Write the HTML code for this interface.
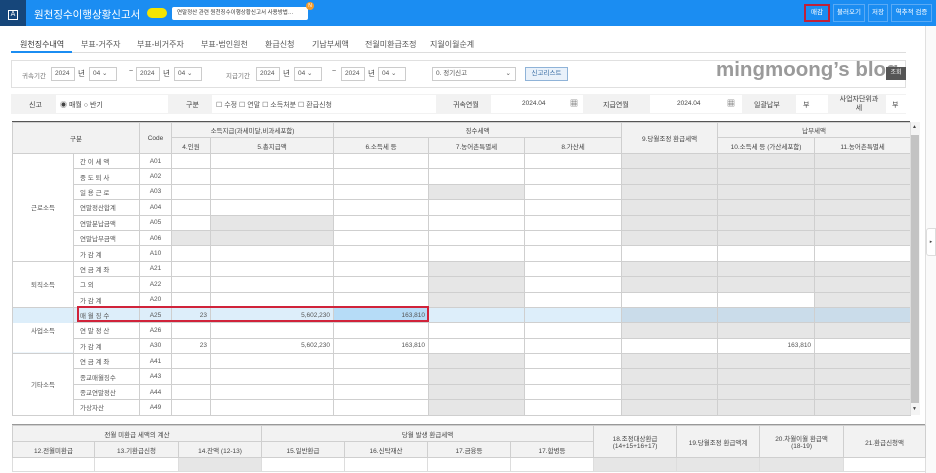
<!DOCTYPE html>
<html><head><meta charset="utf-8">
<style>
*{box-sizing:border-box;margin:0;padding:0}
body{width:936px;height:473px;overflow:hidden;background:#fff;font-family:"Liberation Sans","Noto Sans CJK KR",sans-serif;font-size:7px;color:#444;position:relative}
.a{position:absolute}
.hdr{left:0;top:0;width:936px;height:26px;background:#1b8df2}
.sq{left:0;top:0;width:26px;height:26px;background:#16467a;color:#fff;font-size:9px;text-align:center;line-height:26px}
.sq span{display:inline-block;border:1px solid #fff;width:10px;height:10px;line-height:8px;font-size:7px}
.btn{top:4px;height:18px;border:1px solid #5aaaf5;color:#fff;font-size:6.5px;line-height:16px;text-align:center}
.tabs span{position:absolute;top:39px;font-size:8px;color:#555}
.sel{height:14px;border:1px solid #ccc;background:#fff;font-size:6.5px;line-height:12px;padding-left:3px;color:#555}
table{border-collapse:collapse;table-layout:fixed}
.m td{border:1px solid #cfcfcf;height:15.4px;font-size:6.5px;color:#555;text-align:center;padding:0 3px;white-space:nowrap;overflow:hidden}
.m th,.b th{background:#f2f2f2;border:1px solid #cfcfcf;font-weight:normal;font-size:6.5px;color:#444;white-space:nowrap}
.m td.l{text-align:left;padding-left:6px}
.m td.r{text-align:right}
.g{background:#e6e6e6}
.hl td{background:#ddeefa}
.hl td.g{background:#cadcea}
.hl td.s{background:#b6dcf7}
.b td{border:1px solid #ddd;height:14px}
</style></head><body>
<div class="a hdr"></div>
<div class="a sq"><span>A</span></div>
<div class="a" style="left:34px;top:7px;color:#fff;font-size:10.5px">원천징수이행상황신고서</div>
<div class="a" style="left:147px;top:8px;width:20px;height:10px;border-radius:5px;background:#f5e400"></div>
<div class="a" style="left:172px;top:7px;width:136px;height:13px;background:#fff;border-radius:2px;font-size:5.5px;line-height:13px;padding-left:5px;color:#333">연말정산 관련 원천징수이행상황신고서 사용방법…</div>
<div class="a" style="left:306px;top:2px;width:8px;height:8px;border-radius:4px;background:#f39a2a;color:#fff;font-size:5px;text-align:center;line-height:8px">N</div>
<div class="a btn" style="left:804px;width:26px;border:2px solid #c0213a;line-height:14px">매감</div>
<div class="a btn" style="left:833px;width:32px">불러오기</div>
<div class="a btn" style="left:868px;width:20px">저장</div>
<div class="a btn" style="left:891px;width:41px">역추적 검증</div>

<div class="tabs">
<span style="left:20px;color:#333">원천징수내역</span>
<span style="left:81px">부표-거주자</span>
<span style="left:137px">부표-비거주자</span>
<span style="left:201px">부표-법인원천</span>
<span style="left:265px">환급신청</span>
<span style="left:312px">기납부세액</span>
<span style="left:365px">전월미환급조정</span>
<span style="left:430px">지월이월순계</span>
</div>
<div class="a" style="left:11px;top:52px;width:895px;height:1px;background:#ddd"></div>
<div class="a" style="left:11px;top:51px;width:61px;height:2px;background:#1b8df2"></div>

<div class="a" style="left:11px;top:60px;width:895px;height:28px;border:1px solid #e0e0e0"></div>
<div class="a" style="left:22px;top:70px;font-size:6.5px;color:#777">귀속기간</div>
<div class="a sel" style="left:51px;top:67px;width:24px">2024</div>
<div class="a" style="left:78px;top:68px;font-size:7.5px">년</div>
<div class="a sel" style="left:89px;top:67px;width:28px">04 ⌄</div>
<div class="a" style="left:129px;top:68px;font-size:7px">~</div>
<div class="a sel" style="left:136px;top:67px;width:24px">2024</div>
<div class="a" style="left:163px;top:68px;font-size:7.5px">년</div>
<div class="a sel" style="left:174px;top:67px;width:28px">04 ⌄</div>
<div class="a" style="left:226px;top:70px;font-size:6.5px;color:#777">지급기간</div>
<div class="a sel" style="left:256px;top:67px;width:24px">2024</div>
<div class="a" style="left:283px;top:68px;font-size:7.5px">년</div>
<div class="a sel" style="left:294px;top:67px;width:28px">04 ⌄</div>
<div class="a" style="left:332px;top:68px;font-size:7px">~</div>
<div class="a sel" style="left:341px;top:67px;width:24px">2024</div>
<div class="a" style="left:368px;top:68px;font-size:7.5px">년</div>
<div class="a sel" style="left:378px;top:67px;width:28px">04 ⌄</div>
<div class="a sel" style="left:432px;top:67px;width:84px">0. 정기신고 <span style="float:right;padding-right:4px">⌄</span></div>
<div class="a" style="left:525px;top:67px;width:43px;height:14px;border:1px solid #8fb3d8;background:#e9f1fa;font-size:6.5px;line-height:12px;text-align:center;color:#3c6fa5">신고리스트</div>
<div class="a" style="left:716px;top:58px;font-size:20.5px;font-weight:bold;color:#9a9a9a">mingmoong’s blog</div>
<div class="a" style="left:886px;top:67px;width:20px;height:13px;background:#555;color:#fff;font-size:6px;text-align:center;line-height:13px">조회</div>

<div class="a" style="left:11px;top:94px;width:895px;height:20px;background:#f2f2f2"></div>
<div class="a" style="left:56px;top:95px;width:112px;height:18px;background:#fff"></div>
<div class="a" style="left:212px;top:95px;width:224px;height:18px;background:#fff"></div>
<div class="a" style="left:491px;top:95px;width:92px;height:18px;background:#fff"></div>
<div class="a" style="left:650px;top:95px;width:92px;height:18px;background:#fff"></div>
<div class="a" style="left:796px;top:95px;width:32px;height:18px;background:#fff"></div>
<div class="a" style="left:886px;top:95px;width:20px;height:18px;background:#fff"></div>
<div class="a" style="left:29px;top:100px;font-size:7px">신고</div>
<div class="a" style="left:60px;top:100px;font-size:7px">◉ 매월 ○ 반기</div>
<div class="a" style="left:186px;top:100px;font-size:7px">구분</div>
<div class="a" style="left:216px;top:100px;font-size:7px;color:#555">☐ 수정 ☐ 연말 ☐ 소득처분 ☐ 환급신청</div>
<div class="a" style="left:453px;top:100px;font-size:7px">귀속연월</div>
<div class="a" style="left:522px;top:100px;font-size:6.5px">2024.04</div>
<div class="a" style="left:570px;top:98px;font-size:8px">▦</div>
<div class="a" style="left:603px;top:100px;font-size:7px">지급연월</div>
<div class="a" style="left:677px;top:100px;font-size:6.5px">2024.04</div>
<div class="a" style="left:727px;top:98px;font-size:8px">▦</div>
<div class="a" style="left:754px;top:100px;font-size:7px">일괄납부</div>
<div class="a" style="left:803px;top:100px;font-size:7px">부</div>
<div class="a" style="left:836px;top:95px;font-size:7px;text-align:center;line-height:9px;width:46px">사업자단위과<br>세</div>
<div class="a" style="left:892px;top:100px;font-size:7px">부</div>

<div class="a" style="left:12px;top:121px;width:898px;height:2px;background:#555"></div>
<table class="a m" style="left:12px;top:122px;width:898px">
<colgroup><col style="width:61px"><col style="width:66px"><col style="width:32px"><col style="width:39px"><col style="width:123px"><col style="width:95px"><col style="width:96px"><col style="width:97px"><col style="width:96px"><col style="width:97px"><col style="width:96px"></colgroup>
<tr style="height:15px"><th colspan="2" rowspan="2">구분</th><th rowspan="2">Code</th><th colspan="2">소득지급(과세미달,비과세포함)</th><th colspan="3">징수세액</th><th rowspan="2">9.당월조정 환급세액</th><th colspan="2">납부세액</th></tr>
<tr style="height:16px"><th>4.인원</th><th>5.총지급액</th><th>6.소득세 등</th><th>7.농어촌특별세</th><th>8.가산세</th><th>10.소득세 등 (가산세포함)</th><th>11.농어촌특별세</th></tr>
<tr><td rowspan="7">근로소득</td><td class="l">간 이 세 액</td><td>A01</td><td></td><td></td><td></td><td></td><td></td><td class="g"></td><td class="g"></td><td class="g"></td></tr>
<tr><td class="l">중 도 퇴 사</td><td>A02</td><td></td><td></td><td></td><td></td><td></td><td class="g"></td><td class="g"></td><td class="g"></td></tr>
<tr><td class="l">일 용 근 로</td><td>A03</td><td></td><td></td><td></td><td class="g"></td><td></td><td class="g"></td><td class="g"></td><td class="g"></td></tr>
<tr><td class="l">연말정산합계</td><td>A04</td><td></td><td></td><td></td><td></td><td></td><td class="g"></td><td class="g"></td><td class="g"></td></tr>
<tr><td class="l">연말분납금액</td><td>A05</td><td></td><td class="g"></td><td></td><td></td><td></td><td class="g"></td><td class="g"></td><td class="g"></td></tr>
<tr><td class="l">연말납부금액</td><td>A06</td><td class="g"></td><td class="g"></td><td></td><td></td><td></td><td class="g"></td><td class="g"></td><td class="g"></td></tr>
<tr><td class="l">가 감 계</td><td>A10</td><td></td><td></td><td></td><td></td><td></td><td></td><td></td><td></td></tr>
<tr><td rowspan="3">퇴직소득</td><td class="l">연 금 계 좌</td><td>A21</td><td></td><td></td><td></td><td class="g"></td><td></td><td class="g"></td><td class="g"></td><td class="g"></td></tr>
<tr><td class="l">그 외</td><td>A22</td><td></td><td></td><td></td><td class="g"></td><td></td><td class="g"></td><td class="g"></td><td class="g"></td></tr>
<tr><td class="l">가 감 계</td><td>A20</td><td></td><td></td><td></td><td class="g"></td><td></td><td></td><td></td><td class="g"></td></tr>
<tr class="hl"><td rowspan="3" style="background:linear-gradient(#ddeefa 0 15.4px,#fff 15.4px)">사업소득</td><td class="l">매 월 징 수</td><td>A25</td><td class="r">23</td><td class="r">5,602,230</td><td class="r s">163,810</td><td></td><td></td><td class="g"></td><td class="g"></td><td class="g"></td></tr>
<tr><td class="l">연 말 정 산</td><td>A26</td><td></td><td></td><td></td><td></td><td></td><td class="g"></td><td class="g"></td><td class="g"></td></tr>
<tr><td class="l">가 감 계</td><td>A30</td><td class="r">23</td><td class="r">5,602,230</td><td class="r">163,810</td><td></td><td></td><td></td><td class="r">163,810</td><td></td></tr>
<tr><td rowspan="4">기타소득</td><td class="l">연 금 계 좌</td><td>A41</td><td></td><td></td><td></td><td class="g"></td><td></td><td class="g"></td><td class="g"></td><td class="g"></td></tr>
<tr><td class="l">종교매월징수</td><td>A43</td><td></td><td></td><td></td><td class="g"></td><td></td><td class="g"></td><td class="g"></td><td class="g"></td></tr>
<tr><td class="l">종교연말정산</td><td>A44</td><td></td><td></td><td></td><td class="g"></td><td></td><td class="g"></td><td class="g"></td><td class="g"></td></tr>
<tr><td class="l">가상자산</td><td>A49</td><td></td><td></td><td></td><td class="g"></td><td></td><td class="g"></td><td class="g"></td><td class="g"></td></tr>
</table>
<div class="a" style="left:77px;top:306px;width:352px;height:16px;border:2px solid #d0233a"></div>
<div class="a" style="left:910px;top:122px;width:10px;height:293px;background:#f4f4f4;border-left:1px solid #ddd"></div>
<div class="a" style="left:911px;top:135px;width:8px;height:268px;background:#c3c3c3"></div>
<div class="a" style="left:912px;top:124px;font-size:5px">▲</div>
<div class="a" style="left:912px;top:406px;font-size:5px">▼</div>
<div class="a" style="left:925px;top:26px;width:11px;height:447px;border-left:1px solid #e0e0e0;background:#fafafa"></div>
<div class="a" style="left:926px;top:228px;width:10px;height:28px;border:1px solid #ddd;border-radius:3px 0 0 3px;background:#fff;font-size:5px;line-height:26px;text-align:center">▸</div>

<div class="a" style="left:12px;top:424px;width:913px;height:2px;background:#999"></div>
<table class="a b" style="left:12px;top:425px;width:913px">
<colgroup><col style="width:82px"><col style="width:84px"><col style="width:83px"><col style="width:83px"><col style="width:83px"><col style="width:83px"><col style="width:83px"><col style="width:83px"><col style="width:83px"><col style="width:84px"><col style="width:82px"></colgroup>
<tr style="height:16px"><th colspan="3">전월 미환급 세액의 계산</th><th colspan="4">당월 발생 환급세액</th><th rowspan="2">18.조정대상환급<br>(14+15+16+17)</th><th rowspan="2">19.당월조정 환급액계</th><th rowspan="2">20.차월이월 환급액<br>(18-19)</th><th rowspan="2">21.환급신청액</th></tr>
<tr style="height:16px"><th>12.전월미환급</th><th>13.기환급신청</th><th>14.잔액 (12-13)</th><th>15.일반환급</th><th>16.신탁재산</th><th>17.금융등</th><th>17.합병등</th></tr>
<tr><td></td><td></td><td class="g"></td><td></td><td></td><td></td><td></td><td class="g"></td><td class="g"></td><td class="g"></td><td></td></tr>
</table>
</body></html>
